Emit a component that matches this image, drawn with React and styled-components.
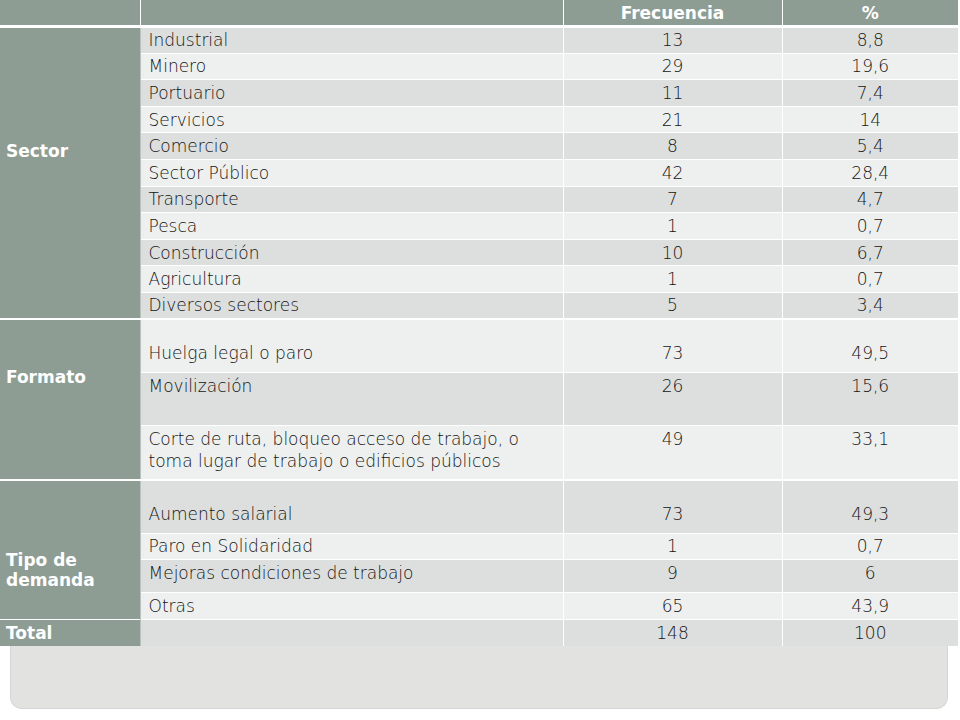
import styled, { createGlobalStyle } from "styled-components";

const GlobalStyle = createGlobalStyle`
  html, body {
    margin: 0;
    padding: 0;
    background: #ffffff;
  }
  body {
    font-family: "DejaVu Sans", "Liberation Sans", sans-serif;
  }
`;

const groups = [
  {
    label: "Sector",
    labelPad: "0 0 44px 6px",
    rows: [
      { name: "Industrial", freq: "13", pct: "8,8" },
      { name: "Minero", freq: "29", pct: "19,6" },
      { name: "Portuario", freq: "11", pct: "7,4" },
      { name: "Servicios", freq: "21", pct: "14" },
      { name: "Comercio", freq: "8", pct: "5,4" },
      { name: "Sector Público", freq: "42", pct: "28,4" },
      { name: "Transporte", freq: "7", pct: "4,7" },
      { name: "Pesca", freq: "1", pct: "0,7" },
      { name: "Construcción", freq: "10", pct: "6,7" },
      { name: "Agricultura", freq: "1", pct: "0,7" },
      { name: "Diversos sectores", freq: "5", pct: "3,4" },
    ],
  },
  {
    label: "Formato",
    labelPad: "0 0 46px 6px",
    rows: [
      { name: "Huelga legal o paro", freq: "73", pct: "49,5", h: 53, align: "bottom" },
      { name: "Movilización", freq: "26", pct: "15,6", h: 53, align: "top" },
      {
        name: "Corte de ruta, bloqueo acceso de trabajo, o toma lugar de trabajo o edificios públicos",
        freq: "49",
        pct: "33,1",
        h: 55,
        align: "top",
      },
    ],
  },
  {
    label: "Tipo de demanda",
    labelPad: "40px 0 0 6px",
    rows: [
      { name: "Aumento salarial", freq: "73", pct: "49,3", h: 53, align: "bottom" },
      { name: "Paro en Solidaridad", freq: "1", pct: "0,7" },
      { name: "Mejoras condiciones de trabajo", freq: "9", pct: "6", h: 33, align: "top" },
      { name: "Otras", freq: "65", pct: "43,9" },
    ],
  },
];

export default function App() {
  let stripe = 0;
  return (
    <Page>
      <GlobalStyle />
      <Table>
        <colgroup>
          <col style={{ width: 140 }} />
          <col style={{ width: 423 }} />
          <col style={{ width: 219 }} />
          <col style={{ width: 176 }} />
        </colgroup>
        <thead>
          <tr>
            <Head />
            <Head />
            <Head>Frecuencia</Head>
            <Head>%</Head>
          </tr>
        </thead>
        <tbody>
          {groups.map((g) =>
            g.rows.map((r, i) => {
              const dark = stripe++ % 2 === 0;
              return (
                <Row key={g.label + r.name} $h={r.h || 26.6} $first={i === 0}>
                  {i === 0 && (
                    <Label rowSpan={g.rows.length} $pad={g.labelPad}>
                      {g.label}
                    </Label>
                  )}
                  <Cell $dark={dark} $align={r.align}>
                    {r.name}
                  </Cell>
                  <Num $dark={dark} $align={r.align}>
                    {r.freq}
                  </Num>
                  <Num $dark={dark} $align={r.align}>
                    {r.pct}
                  </Num>
                </Row>
              );
            })
          )}
          <Row $h={27}>
            <Label $pad="0 0 0 6px">Total</Label>
            <Cell $dark />
            <Num $dark>148</Num>
            <Num $dark>100</Num>
          </Row>
        </tbody>
      </Table>
      <CardFoot />
    </Page>
  );
}

const Page = styled.div`
  width: 960px;
  height: 720px;
  display: flex;
  flex-direction: column;
`;

const Table = styled.table`
  width: 958px;
  border-collapse: collapse;
  table-layout: fixed;
  font-size: 17px;
  color: #141414;
`;

const Head = styled.th`
  height: 25px;
  padding: 0;
  background: #8e9d94;
  color: #ffffff;
  font-weight: bold;
  font-size: 17px;
  text-align: center;
  border-left: 1px solid #ffffff;
  border-bottom: 3px solid #ffffff;
  &:first-child {
    border-left: none;
  }
`;

const Row = styled.tr`
  height: ${(p) => p.$h}px;
  & > td {
    border-top: ${(p) => (p.$first ? "2px" : "1px")} solid #ffffff;
  }
`;

const Label = styled.td`
  background: #8e9d94;
  color: #ffffff;
  font-weight: bold;
  font-size: 17px;
  line-height: 20px;
  vertical-align: middle;
  padding: ${(p) => p.$pad};
  border-right: 1px solid #b9c3bd;
`;

const Cell = styled.td`
  background: ${(p) => (p.$dark ? "#dcdfde" : "#eef0ef")};
  padding: ${(p) =>
    p.$align === "bottom" ? "0 8px 8px 8px" : p.$align === "top" ? "2px 8px 0 8px" : "0 8px"};
  line-height: 22px;
  font-weight: 300;
  vertical-align: ${(p) => p.$align || "middle"};
  border-left: 1px solid #ffffff;
  text-align: left;
`;

const Num = styled(Cell)`
  text-align: center;
`;

const CardFoot = styled.div`
  margin: 0 10px;
  width: 938px;
  flex: 0 0 63px;
  background: #e2e2e1;
  border: 1px solid #d5d5d5;
  border-top: none;
  border-radius: 0 0 12px 12px;
  box-sizing: border-box;
`;
